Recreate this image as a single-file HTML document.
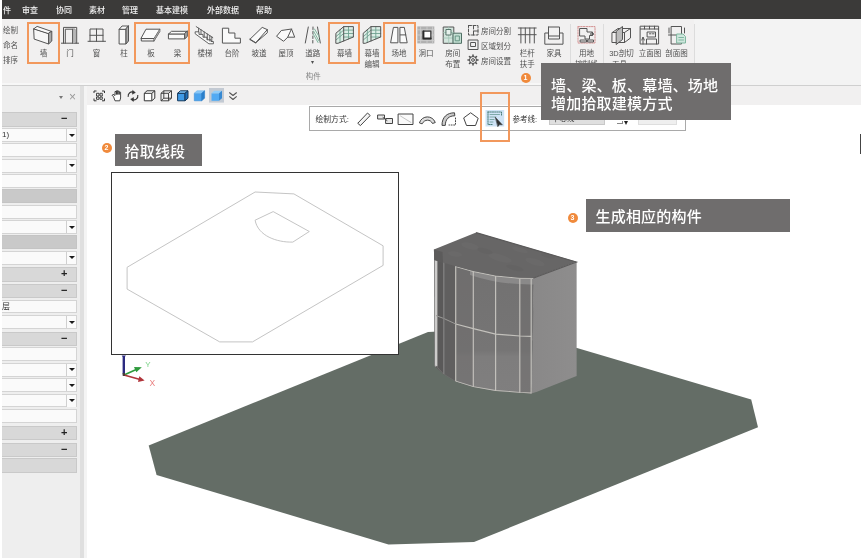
<!DOCTYPE html>
<html lang="zh-CN">
<head>
<meta charset="utf-8">
<title>拾取建模</title>
<style>
*{box-sizing:border-box;margin:0;padding:0}
html,body{width:861px;height:558px;overflow:hidden;background:#fff}
body{font-family:"Liberation Sans","Noto Sans CJK SC",sans-serif;position:relative}
#app{position:absolute;left:0;top:0;width:861px;height:558px;overflow:hidden;background:#fff;filter:blur(0.45px)}
.abs{position:absolute}
#menubar{position:absolute;left:2px;top:0;width:859px;height:19px;background:#3b3a39}
#menubar span{position:absolute;top:6px;font-size:8px;line-height:10px;color:#f2f2f2;white-space:nowrap;font-weight:500}
#ribbon{position:absolute;left:2px;top:19px;width:859px;height:66px;background:#f1f0f0;border-bottom:2.5px solid #f7f7f7}
.rl{position:absolute;font-size:7.5px;line-height:9px;color:#505050;font-weight:400;white-space:nowrap;text-align:center;transform:translateX(-50%)}
.rt{position:absolute;font-size:7.5px;line-height:9px;color:#505050;font-weight:400;white-space:nowrap}
.obox{position:absolute;border:2px solid #f2985c}
.sep{position:absolute;width:1px;background:#dcdcdc;top:24px;height:56px}
#strip{position:absolute;left:84px;top:86px;width:777px;height:19px;background:#f1f0f0}
#panel{position:absolute;left:2px;top:86px;width:82.3px;height:472px;background:#eeeeee;border-right:4px solid #dfdfdf;overflow:hidden}
.row{position:absolute;left:0;width:75px;height:14px;background:#fafafa;border:1px solid #d4d4d4;border-left:none}
.row.h{background:#d8d8d8;border-color:#c9c9c9}
.row.g{background:#c9c9c9;border-color:#c4c4c4}
.row .dd{position:absolute;right:0;top:0;width:10px;height:12px;border-left:1px solid #d0d0d0;background:#fbfbfb}
.row .dd:after{content:"";position:absolute;left:1.5px;top:4.5px;border:3px solid transparent;border-top:3.5px solid #1a1a1a;border-bottom:none}
.row .pm{position:absolute;right:8.5px;top:-1px;font-size:11px;line-height:13px;font-weight:bold;color:#222;font-family:"Liberation Sans",sans-serif}
.tip{position:absolute;background:#6f6d6d;color:#fff;font-size:15px;white-space:nowrap;letter-spacing:0.2px;font-weight:500}
.num{position:absolute;width:10px;height:10px;border-radius:50%;background:#f08a3c;color:#fff;font-size:7px;line-height:10px;text-align:center;font-weight:bold;font-family:"Liberation Sans",sans-serif}
.row .tx{position:absolute;left:0;top:1px;font-size:8px;line-height:10px;color:#333}
</style>
</head>
<body>
<div id="app">

<!-- 3D viewport scene -->
<svg class="abs" style="left:0;top:0" width="861" height="558" viewBox="0 0 861 558">
  <defs>
    <linearGradient id="gl" x1="0" y1="0" x2="0" y2="1">
      <stop offset="0" stop-color="#6d6c6c"/><stop offset="1" stop-color="#7b7a7a"/>
    </linearGradient>
  </defs>
  <!-- ground -->
  <polygon points="148.7,445.4 428,332 470,330 577,348 751.2,399.4 758,427.2 474,542 388.5,544.4 156.6,475" fill="#646d66"/>
  <!-- building right wall -->
  <defs>
    <linearGradient id="wl" x1="0" y1="0" x2="1" y2="0">
      <stop offset="0" stop-color="#898888"/><stop offset="1" stop-color="#8e8d8d"/>
    </linearGradient>
    <linearGradient id="g1" x1="0" y1="0" x2="0" y2="1">
      <stop offset="0" stop-color="#717070"/><stop offset="0.67" stop-color="#767575"/><stop offset="0.71" stop-color="#7e7d7d"/><stop offset="1" stop-color="#807f7f"/>
    </linearGradient>
    <clipPath id="gc"><path d="M434.3,255 L434.6,366.3 L443.6,374.3 L455.7,381.6 L473.3,387 L495.6,390.9 L519.8,392.7 L531.8,393.5 L534,278 Z"/></clipPath>
  </defs>
  <path d="M533.7,278 L576.6,261.8 L576.6,376 L537,391.8 L531.3,393.5 Z" fill="url(#wl)"/>
  <!-- glass body -->
  <g clip-path="url(#gc)">
    <rect x="434" y="250" width="100" height="150" fill="url(#g1)"/>
    <rect x="434" y="250" width="10" height="150" fill="#5a5959"/>
    <rect x="444" y="250" width="11.7" height="150" fill="#605f5f"/>
    <rect x="455.7" y="250" width="17.6" height="150" fill="#6d6c6c" opacity="0.55"/>
    <rect x="519.8" y="250" width="12" height="150" fill="#6f6e6e" opacity="0.6"/>
    <!-- slab edge band -->
    <path d="M470,268 Q500,278 534,277.5 L534,284.5 Q500,285 470,275 Z" fill="#8a8989"/>
    <!-- mullions -->
    <g stroke="#c2c0bb" stroke-width="1.2" fill="none">
      <path d="M436,259 V366.5" stroke="#cdcccb" stroke-width="2.8"/>
      <path d="M455.7,266 V382 M473.3,271 V388 M495.6,276 V391.5 M519.8,279 V393 M531.2,279 V394"/>
      <path d="M455.7,324 L473.3,328.6 L495.6,334.2 L519.8,336 L531.3,336.3"/>
      <path d="M436,315.6 L443.6,318.4 L455.7,324" stroke="#9a9996" stroke-width="1"/>
      <path d="M455.7,381.6 L473.3,387 L495.6,390.9 L519.8,392.7 L531.3,393.3" stroke-width="1.6"/>
      <path d="M436,365.8 L443.6,374 L455.7,381.6" stroke="#6e6d6c" stroke-width="1"/>
      <path d="M455.7,266.5 L473.3,271.5 L495.6,276 L519.8,278.3 L533,278.3" stroke-width="1.1"/>
    </g>
    <path d="M443.8,262 V374" stroke="#858484" stroke-width="1.2"/>
  </g>
  <!-- roof -->
  <path d="M476.1,232.4 L433.9,249.5 L434.3,260 Q446,263.5 455.7,266.3 L473.3,271 L495.6,275.5 L519.8,277.8 L533.7,278 L576.5,261.8 Z" fill="#676666"/>
  <g fill="#6f6e6e" opacity="0.45">
    <ellipse cx="470" cy="246" rx="9" ry="3" transform="rotate(14 470 246)"/>
    <ellipse cx="500" cy="258" rx="12" ry="3.5" transform="rotate(16 500 258)"/>
    <ellipse cx="535" cy="262" rx="10" ry="3" transform="rotate(16 535 262)"/>
    <ellipse cx="455" cy="254" rx="7" ry="2.5" transform="rotate(10 455 254)"/>
    <ellipse cx="520" cy="250" rx="8" ry="2.2" transform="rotate(16 520 250)"/>
  </g>
  <g fill="#616060" opacity="0.45">
    <ellipse cx="485" cy="251" rx="8" ry="2.5" transform="rotate(15 485 251)"/>
    <ellipse cx="515" cy="268" rx="9" ry="2.5" transform="rotate(15 515 268)"/>
    <ellipse cx="548" cy="256" rx="7" ry="2" transform="rotate(16 548 256)"/>
  </g>
  <path d="M433.9,249.5 L434.3,260 L443,262.8 L442.5,252 Z" fill="#5c5b5b"/>
  <path d="M476.1,232.6 L576.3,262 L533.7,278" fill="none" stroke="#5b5a5a" stroke-width="1.2"/>
</svg>

<div id="menubar">
  <span style="left:1px">件</span>
  <span style="left:20px">审查</span>
  <span style="left:54px">协同</span>
  <span style="left:87px">素材</span>
  <span style="left:120px">管理</span>
  <span style="left:154px">基本建模</span>
  <span style="left:205px">外部数据</span>
  <span style="left:254px">帮助</span>
</div>

<div id="ribbon"></div>
<div class="abs" style="left:694px;top:19px;width:167px;height:66px;background:#f3f3f3"></div>
<div class="abs" style="left:2px;top:85px;width:859px;height:1px;background:#cfcfcf"></div>

<!-- ribbon icons -->
<svg class="abs" style="left:0;top:0" width="861" height="86" viewBox="0 0 861 86" fill="none" stroke="#555" stroke-width="1" stroke-linejoin="round" stroke-linecap="round">
  <!-- 墙 -->
  <path d="M34,28.7 L48.6,33.4 L48.6,44 L34.5,39.2 Z" fill="#f6f6f6"/>
  <path d="M34,28.7 L37.1,26.4 L51.8,31.5 L48.6,33.4 Z" fill="#fafafa"/>
  <path d="M51.8,31.5 L51.8,41 L48.6,44 L48.6,33.4 Z" fill="#aaa"/>
  <!-- 门 -->
  <path d="M61.4,43.2 H78.6 M63.5,43.2 V27.4 H76.7 V43.2 M65.3,43.2 V29.2 H74.9 V43.2"/>
  <path d="M72.6,29.2 H74.9 V43.2 H72.6 Z" fill="#bbb" stroke="none"/>
  <path d="M72.6,29.2 V43.2"/>
  <!-- 窗 -->
  <path d="M88,41.3 H105.5 M90,41.3 V29 H103 V41.3 M96.5,29 V41.3 M90,35.3 H103"/>
  <!-- 柱 -->
  <path d="M119.5,29 H126 V44 H119.5 Z" fill="#f8f8f8"/>
  <path d="M119.5,29 L122,26 H128.5 L126,29 Z" fill="#fafafa"/>
  <path d="M128.5,26 V41 L126,44 V29 Z" fill="#aaa"/>
  <!-- 板 -->
  <path d="M146.4,29.2 H159.8 L154,38.5 H141.3 Z" fill="#fafafa"/>
  <path d="M141.3,38.5 V41 H154 L159.8,31.5 V29.2 M154,38.5 V41" />
  <path d="M154,38.5 L159.8,29.2 V31.5 L154,41 Z" fill="#999" stroke="none"/>
  <!-- 梁 -->
  <path d="M168.8,33.8 H184.7 V38.9 H168.8 Z" fill="#fafafa"/>
  <path d="M168.8,33.8 L171.5,31.3 H187.3 L184.7,33.8 Z" fill="#fafafa"/>
  <path d="M187.3,31.3 V36.5 L184.7,38.9 V33.8 Z" fill="#aaa"/>
  <!-- 楼梯 -->
  <path d="M195.5,31.8 H199 V34.4 H203 V37.2 H207 V39.8 H211 V41.5 H213.4 V43.8 H208.9 L195.5,34 Z" fill="#f8f8f8" stroke-width="0.9"/>
  <path d="M196.2,26.6 L212.8,37.6 M198.6,28.2 V31.5 M201,29.8 V34 M204.2,32 V37 M207.3,34 V39.5 M209.8,35.6 V41 M211.8,37 V41.2" stroke-width="0.9"/>
  <!-- 台阶 -->
  <path d="M222.8,28.2 H228.7 V33 H234.9 V38.2 H240.4 V43.1 H222.8 Z" fill="#fafafa"/>
  <!-- 坡道 -->
  <path d="M250,39.2 L262.2,27.4 L267.3,29.6 V32.8 L255.8,42.7 Z" fill="#fafafa"/>
  <path d="M255.8,42.7 L267.3,29.6 M255.8,42.7 L250,39.2"/>
  <!-- 屋顶 -->
  <path d="M276.8,36 L281.3,30.5 L291.5,29 L294.7,37.2 H287.7 L283.9,41 Z" fill="#fafafa"/>
  <path d="M291.5,29 L287.7,37.2"/>
  <!-- 道路 -->
  <path d="M308.3,27 L305.3,43 M317.5,27 L320.3,43"/>
  <path d="M313,27 L312.8,43" stroke-dasharray="2.5 2"/>
  <path d="M313.5,31 L319,41 M313.5,34.5 L318,42.5 M314.5,29 L319.3,37" stroke="#7fb79f"/>
  <!-- 幕墙 -->
  <g>
  <path d="M336.2,33 L343.7,26.6 H353.4 V37 L338,43.3 H336.2 Z" fill="#dcede6" stroke="none"/>
  <path d="M336.2,36.4 L343.7,30.1 H353.4 M336.2,39.8 L343.7,33.5 H353.4 M340,29.8 V42.4 M348.5,26.6 V39 M343.7,37 H353.4" stroke="#6fa391" stroke-width="0.9"/>
  <path d="M336.2,33 L343.7,26.6 H353.4 V37 L338,43.3 H336.2 Z M343.7,26.6 V41"/>
  </g>
  <!-- 幕墙编辑 -->
  <g transform="translate(27.3,0)">
  <path d="M336.2,33 L343.7,26.6 H353.4 V37 L338,43.3 H336.2 Z" fill="#dcede6" stroke="none"/>
  <path d="M336.2,36.4 L343.7,30.1 H353.4 M336.2,39.8 L343.7,33.5 H353.4 M340,29.8 V42.4 M348.5,26.6 V39 M343.7,37 H353.4" stroke="#6fa391" stroke-width="0.9"/>
  <path d="M336.2,33 L343.7,26.6 H353.4 V37 L338,43.3 H336.2 Z M343.7,26.6 V41"/>
  </g>
  <!-- 场地 -->
  <path d="M393.8,27.4 H397.9 V42.8 H391 Z M400.3,27.4 H404.3 L407.2,42.8 H400.3 Z M400.3,34.9 H405.8" fill="#fafafa"/>
  <!-- 洞口 -->
  <rect x="417.3" y="26.4" width="17" height="17" fill="#b0b0b0" stroke="none"/>
  <path d="M417.3,29.8 H434.3 M417.3,40.6 H434.3 M420.6,26.4 V43.4 M432.6,26.4 V43.4 M417.3,35 H423 M431,35 H434.3 M427,26.4 V31 M427,39.5 V43.4" stroke="#cfcfcf" stroke-width="0.8"/>
  <rect x="423" y="31.2" width="7.8" height="7.8" fill="#fff" stroke="#3c3c3c" stroke-width="1.2"/>
  <path d="M423.6,31.2 V38.4 H430.8" stroke="#2a2a2a" stroke-width="1.6"/>
  <!-- 房间布置 -->
  <rect x="443.6" y="27" width="10.2" height="16.3" fill="#d3e5dd" stroke="#555"/>
  <path d="M443.6,32.5 H453.8 M443.6,38 H453.8 M448.7,27 V43.3" stroke="#9fc4b4" stroke-width="0.8"/>
  <path d="M446.3,29.5 H451 V35 H446.3 Z" stroke="#4a6a5f" stroke-width="0.9" fill="#e6f1ec"/>
  <rect x="453.3" y="33.2" width="8.2" height="10.1" fill="#c4dfd3" stroke="#4f6f64"/>
  <path d="M455.6,36 H459.4 V40.8 H455.6 Z" stroke="#5f8f7d" stroke-width="0.9"/>
  <!-- 房间分割 -->
  <path d="M468.5,25.5 H478 V35 H468.5 Z" stroke-dasharray="3 1.5"/>
  <path d="M473.5,25.5 V29 M473.5,31 V35 M474,31 H478"/>
  <!-- 区域划分 -->
  <path d="M468.5,40 H478 V49.5 H468.5 Z M471,42.5 H475.5 V46.5 H471 Z"/>
  <!-- 房间设置 gear -->
  <circle cx="473" cy="60" r="3.6"/>
  <circle cx="473" cy="60" r="1.4"/>
  <path d="M473,55 V56.4 M473,63.6 V65 M468,60 H469.4 M476.6,60 H478 M469.5,56.5 L470.5,57.5 M475.5,62.5 L476.5,63.5 M469.5,63.5 L470.5,62.5 M475.5,57.5 L476.5,56.5" stroke-width="1.6"/>
  <!-- 栏杆扶手 -->
  <path d="M518.3,28 H536.2 M518.3,34.7 H536.2 M520.9,28 V43 M525.3,28 V43 M529.8,28 V43 M534.3,28 V43"/>
  <!-- 家具 -->
  <path d="M548.5,27 H559.5 V33.5 M548.5,27 V33.5 M545.2,33 H548.5 V39 H559.5 V33 H563 V44.2 H545.2 Z M548.5,36 H559.5"/>
  <!-- 用地控制线 -->
  <path d="M578,26.6 H595 V43 H578 Z" stroke="#c77" stroke-dasharray="1.5 1.2" stroke-width="0.8"/>
  <path d="M580,28.5 H587 V32 H592.5 V35.5 H589.5 V39 H585 V36 H580 Z M580.5,40 H586.5 V42 H580.5 Z M588,40 H593.5 V42 H588 Z"/>
  <circle cx="592" cy="34" r="1.3"/>
  <!-- 3D剖切 -->
  <path d="M612.3,32.5 L618,28.5 H630.5 V38 L624.5,42.5 H612.3 Z M612.3,32.5 H624.5 V42.5 M624.5,32.5 L630.5,28.5"/>
  <path d="M616.5,31 L622.5,26.5 V39.5 L616.5,44.3 Z" fill="#bbb"/>
  <!-- 立面图 -->
  <path d="M640.5,26.2 H658.6 V44 H640.5 Z M640.5,29 H658.6 M644.5,26.2 V29 M649.5,26.2 V29 M654.5,26.2 V29"/>
  <path d="M647.5,32 H655.5 V37 H647.5 Z M649.5,33.8 h1.5 M652.5,33.8 h1.5 M646.5,44 V39 H656.5 V44 M643,44 V38 M641.8,40 L643,37 L644.3,40"/>
  <!-- 剖面图 -->
  <path d="M671.5,26.5 H681.5 V44 H671.5 Z M668.5,35 H681.5 M669,28 V33 M684.5,28 V33" />
  <path d="M677,34 H683 L685.5,36.5 V43 H677 Z" fill="#cfe6dd" stroke="#7fb79f"/>
  <path d="M678.8,37.5 H683.5 M678.8,40 H683.5" stroke="#7fb79f"/>
</svg>

<div class="sep" style="left:570px"></div>
<div class="sep" style="left:603px"></div>
<div class="sep" style="left:694px"></div>

<!-- ribbon labels -->
<span class="rt" style="left:3px;top:25.5px">绘制</span>
<span class="rt" style="left:3px;top:41px">命名</span>
<span class="rt" style="left:3px;top:55.5px">排序</span>
<span class="rl" style="left:43.5px;top:49px">墙</span>
<span class="rl" style="left:70px;top:49px">门</span>
<span class="rl" style="left:96.5px;top:49px">窗</span>
<span class="rl" style="left:124px;top:49px">柱</span>
<span class="rl" style="left:151px;top:49px">板</span>
<span class="rl" style="left:177.5px;top:49px">梁</span>
<span class="rl" style="left:205px;top:49px">楼梯</span>
<span class="rl" style="left:232px;top:49px">台阶</span>
<span class="rl" style="left:259px;top:49px">坡道</span>
<span class="rl" style="left:286px;top:49px">屋顶</span>
<span class="rl" style="left:312.8px;top:49px">道路</span>
<span class="rl" style="left:312.8px;top:57.5px;font-size:6px">▾</span>
<span class="rl" style="left:344.5px;top:49px">幕墙</span>
<span class="rl" style="left:372px;top:49px;line-height:11px;top:48px">幕墙<br>编辑</span>
<span class="rl" style="left:399px;top:49px">场地</span>
<span class="rl" style="left:426px;top:49px">洞口</span>
<span class="rl" style="left:452.7px;top:48px;line-height:11px">房间<br>布置</span>
<span class="rt" style="left:481px;top:27px">房间分割</span>
<span class="rt" style="left:481px;top:42px">区域划分</span>
<span class="rt" style="left:481px;top:56.5px">房间设置</span>
<span class="rl" style="left:527.3px;top:48px;line-height:11px">栏杆<br>扶手</span>
<span class="rl" style="left:554px;top:49px">家具</span>
<span class="rl" style="left:586.5px;top:48px;line-height:11px">用地<br>控制线</span>
<span class="rl" style="left:621.5px;top:48px;line-height:11px">3D剖切<br>工具▾</span>
<span class="rl" style="left:650px;top:49px">立面图</span>
<span class="rl" style="left:676.5px;top:49px">剖面图</span>
<span class="rl" style="left:313.2px;top:72px;color:#858585;font-weight:400">构件</span>

<!-- orange highlight boxes -->
<div class="obox" style="left:27px;top:22px;width:33px;height:42px"></div>
<div class="obox" style="left:133.5px;top:22px;width:56px;height:42px"></div>
<div class="obox" style="left:327.5px;top:22px;width:32.5px;height:42px"></div>
<div class="obox" style="left:383px;top:22px;width:33px;height:42px"></div>
<div id="strip"></div>
<div class="abs" style="left:84.3px;top:86px;width:2.3px;height:472px;background:#f4f4f4"></div>
<svg class="abs" style="left:84px;top:86px" width="170" height="20" viewBox="84 86 170 20" fill="none" stroke="#333" stroke-width="1" stroke-linejoin="round">
  <!-- zoom extents -->
  <path d="M94,93 V91 H96.5 M102,91 H104.5 V93 M104.5,98.5 V100.8 H102 M96.5,100.8 H94 V98.5" />
  <path d="M96.5,93.3 H99 V96 H96.5 Z M100,93.3 H102.3 V96 H100 Z M96.5,97 H99 V99.3 H96.5 Z M100,97 H102.3 V99.3 H100 Z" stroke-width="0.9"/>
  <!-- hand -->
  <path d="M113.5,96.5 L112,95.3 L113,94.3 L115,95.5 V91.5 H116.4 V94.5 V90.8 H117.8 V94.5 V91.2 H119.2 V94.5 V92.2 H120.6 V98 L119.8,100.8 H115 Z" fill="#fff" stroke-width="0.9"/>
  <!-- rotate -->
  <path d="M128.2,96.8 C127.6,93.2 131,91 133.8,92.4 M137.8,95 C138.4,98.6 135,100.8 132.2,99.4" stroke-width="1.1"/>
  <path d="M132.6,90.4 L135.4,92.6 L132.4,94.2 Z M133.4,101.4 L130.6,99.2 L133.6,97.6 Z" fill="#333" stroke-width="0.5"/>
  <!-- wire cube -->
  <path d="M144.3,93.3 H151.8 V100.8 H144.3 Z M144.3,93.3 L147,90.8 H154.8 L151.8,93.3 M154.8,90.8 V98.2 L151.8,100.8" fill="#fff"/>
  <!-- wire cube hidden -->
  <path d="M161,93.3 H168.5 V100.8 H161 Z M163.8,90.8 H171.5 V98.2 H163.8 Z M161,93.3 L163.8,90.8 M168.5,93.3 L171.5,90.8 M168.5,100.8 L171.5,98.2 M161,100.8 L163.8,98.2" fill="none" stroke-width="0.9"/>
  <!-- shaded cube w/ edges -->
  <path d="M177.6,93.3 H185 V100.8 H177.6 Z" fill="#3f9ae6" stroke="#16395c"/>
  <path d="M177.6,93.3 L180.4,90.8 H188 L185,93.3 Z" fill="#7cc0f6" stroke="#16395c"/>
  <path d="M188,90.8 V98.2 L185,100.8 V93.3 Z" fill="#1f6fb8" stroke="#16395c"/>
  <!-- shaded cube -->
  <path d="M194.3,93.3 H201.6 V100.8 H194.3 Z" fill="#4aa3ee" stroke="#3a8ad0" stroke-width="0.6"/>
  <path d="M194.3,93.3 L197,90.8 H204.6 L201.6,93.3 Z" fill="#8ccaf9" stroke="#6ab2ee" stroke-width="0.6"/>
  <path d="M204.6,90.8 V98.2 L201.6,100.8 V93.3 Z" fill="#2a7fcb" stroke="#2a7fcb" stroke-width="0.6"/>
  <!-- selected realistic cube -->
  <rect x="209" y="88" width="15" height="14.6" fill="#c3cad3" stroke="none"/>
  <path d="M211.5,93.3 H219 V100.8 H211.5 Z" fill="#52aaf3" stroke="none"/>
  <path d="M211.5,93.3 L214.3,90.8 H222 L219,93.3 Z" fill="#8fcdfb" stroke="none"/>
  <path d="M222,90.8 V98.2 L219,100.8 V93.3 Z" fill="#3689d3" stroke="none"/>
  <!-- chevron -->
  <path d="M229.3,92.5 L233,95.5 L236.7,92.5 M229.3,96.3 L233,99.5 L236.7,96.3" stroke="#555" stroke-width="1.1"/>
</svg>

<!-- draw-mode toolbar -->
<div class="abs" style="left:309px;top:106px;width:377px;height:24.5px;background:#fff;border:1px solid #a9a9a9"></div>
<span class="rt" style="left:315.5px;top:115px;color:#333;font-size:7.8px">绘制方式:</span>
<span class="rt" style="left:512.5px;top:115px;color:#333">参考线:</span>
<div class="abs" style="left:549px;top:112px;width:56px;height:12.5px;background:#dfdfdf;border:1px solid #c8c8c8"></div>
<span class="rt" style="left:552px;top:113.5px;color:#333">中心线</span>
<span class="abs" style="left:624px;top:120.5px;width:0;height:0;border:2.6px solid transparent;border-top:4px solid #222;border-bottom:none"></span>
<div class="abs" style="left:617px;top:121px;width:6px;height:3px;border-right:1px solid #888;border-bottom:1px solid #888"></div>
<div class="abs" style="left:638px;top:112px;width:39px;height:12.5px;background:#efefef;border:1px solid #dedede"></div>
<svg class="abs" style="left:350px;top:106px" width="160" height="25" viewBox="350 106 160 25" fill="none" stroke="#444" stroke-width="1" stroke-linejoin="round" stroke-linecap="round">
  <rect x="485.5" y="110" width="18.7" height="16.5" fill="#cfe3f6" stroke="none"/>
  <!-- line -->
  <path d="M358,123 L367.5,113 L370.2,115.5 L360.7,125.3 Z" fill="#f4f4f4"/>
  <!-- chain -->
  <path d="M378,115 H384.5 V119 H378 Z M383,117.5 L387,120.5 M386,118.5 H392.5 V123.5 H386 Z" fill="#e8e8e8"/>
  <!-- rectangle -->
  <path d="M398.5,114 H413 V124.5 H398.5 Z" fill="#fafafa"/>
  <path d="M400.5,116 L411,122.5" stroke="#aaa" stroke-width="0.7"/>
  <!-- arc -->
  <path d="M419.5,122.5 C422,115 432.5,115 435.3,122.5 L432.5,123.5 C430.5,119 424.5,119 422.3,123.5 Z" fill="#ddd"/>
  <!-- arc 2 -->
  <path d="M442,125 C442,117 447,112.8 454.5,112.8 L454.8,115.8 C449,115.8 445.3,119 445.3,125 Z" fill="#ccc"/>
  <path d="M455.5,118 V125 H449" stroke-dasharray="1 1.6"/>
  <!-- pentagon -->
  <path d="M471,113 L478.2,118.3 L475.5,125.5 H466.5 L463.8,118.3 Z" fill="#fff"/>
  <!-- pick -->
  <path d="M488,112 H501.5 V116 M488,112 V124.5 H493" stroke="#4b7f7a" stroke-dasharray="1.2 1"/>
  <path d="M490,114.5 H499.5 M490,117 H496 M490,119.5 H494 M490,122 H493" stroke="#6a9b96" stroke-width="0.8"/>
  <path d="M495.5,117.5 L502.3,124.8 L499.6,124.6 L498,126.4 Z" fill="#333" stroke="#333" stroke-width="0.6"/>
</svg>
<div class="obox" style="left:479.5px;top:92px;width:30.5px;height:50px"></div>

<!-- 2D pick source view -->
<div class="abs" style="left:110.8px;top:171.5px;width:288.4px;height:183px;background:#fff;border:1.2px solid #333"></div>
<svg class="abs" style="left:111px;top:171px" width="289" height="184" viewBox="111 171 289 184" fill="none" stroke="#bdbdbd" stroke-width="0.9" stroke-linejoin="round">
  <polygon points="255.1,192 293.9,193.9 383.1,245.8 383.1,265.4 252.5,341.9 219.7,341.9 127.1,289.1 127.1,267.3"/>
  <path d="M255.1,220.2 L273.2,211.6 L309.3,231.5 L292.8,242.1 C277,242.5 258,236 255.1,220.2 Z"/>
</svg>

<!-- axis triad -->
<svg class="abs" style="left:112px;top:352.8px" width="50" height="40" viewBox="112 352 50 40" fill="none" stroke-linecap="round">
  <path d="M123.8,355 V373.5" stroke="#2c2a80" stroke-width="2.4" stroke-linecap="butt"/>
  <path d="M121.6,354.5 H126 L123.8,357 Z" fill="#2c2a80"/>
  <path d="M124,374 L139,367.3" stroke="#2e9a3c" stroke-width="1.7"/>
  <path d="M134,366 L141.8,366.3 L136.3,371.3 Z" fill="#2e9a3c"/>
  <path d="M124,374 L141,378.7" stroke="#b0343a" stroke-width="1.7"/>
  <path d="M139.3,375.3 L144.6,379.6 L138,381 Z" fill="#b0343a"/>
  <path d="M122.7,372 H125 V375 H122.7 Z" fill="#4a3a3a"/>
  <text x="145.2" y="366.4" font-family="Liberation Sans, sans-serif" font-size="8" fill="#79d286">Y</text>
  <text x="149.4" y="385" font-family="Liberation Sans, sans-serif" font-size="8.5" fill="#ea8080">X</text>
</svg>

<!-- callouts -->
<div class="tip" style="left:541px;top:63px;width:190px;height:56.5px;padding:14px 0 0 10px;line-height:18px">墙、梁、板、幕墙、场地<br>增加拾取建模方式</div>
<div class="num" style="left:520.5px;top:73px">1</div>
<div class="tip" style="left:114.5px;top:134px;width:87.5px;height:32.4px;padding-left:10px;line-height:35px">拾取线段</div>
<div class="num" style="left:101.5px;top:143px">2</div>
<div class="tip" style="left:585.5px;top:198.5px;width:204px;height:33px;padding-left:10px;line-height:35px">生成相应的构件</div>
<div class="num" style="left:567.5px;top:212.5px">3</div>
<div class="abs" style="left:859.5px;top:134px;width:1.5px;height:19.5px;background:#444"></div>
<div id="panel">
<span class="abs" style="left:56.5px;top:9.5px;width:0;height:0;border:2.6px solid transparent;border-top:3.2px solid #777;border-bottom:none"></span><span class="abs" style="left:67px;top:4px;font-size:12px;color:#999;line-height:14px;font-family:'Liberation Sans',sans-serif">×</span>
<div class="row h" style="top:26px;height:15px"><span class="pm">−</span></div>
<div class="row" style="top:42px;height:14px"><span class="dd"></span><span class="tx">1)</span></div>
<div class="row" style="top:57px;height:14px"></div>
<div class="row" style="top:72.5px;height:14px"><span class="dd"></span></div>
<div class="row" style="top:88px;height:13.5px"></div>
<div class="row g" style="top:102.5px;height:14.5px"></div>
<div class="row" style="top:118.5px;height:14px"></div>
<div class="row" style="top:134px;height:13.5px"><span class="dd"></span></div>
<div class="row g" style="top:148.5px;height:14.5px"></div>
<div class="row" style="top:164.5px;height:14px"><span class="dd"></span></div>
<div class="row h" style="top:181px;height:14.5px"><span class="pm">+</span></div>
<div class="row h" style="top:197.5px;height:14.5px"><span class="pm">−</span></div>
<div class="row" style="top:213.5px;height:13.5px"><span class="tx">层</span></div>
<div class="row" style="top:229px;height:14px"><span class="dd"></span></div>
<div class="row h" style="top:245.5px;height:14px"><span class="pm">−</span></div>
<div class="row" style="top:261px;height:13.5px"></div>
<div class="row" style="top:276.5px;height:14px"><span class="dd"></span></div>
<div class="row" style="top:292px;height:14px"><span class="dd"></span></div>
<div class="row" style="top:307.5px;height:13.5px"><span class="dd"></span></div>
<div class="row" style="top:323px;height:13.5px"></div>
<div class="row h" style="top:339.5px;height:14px"><span class="pm">+</span></div>
<div class="row h" style="top:356.5px;height:14px"><span class="pm">−</span></div>
<div class="row h" style="top:371.5px;height:15.5px"></div>
</div>

</div>
</body>
</html>
